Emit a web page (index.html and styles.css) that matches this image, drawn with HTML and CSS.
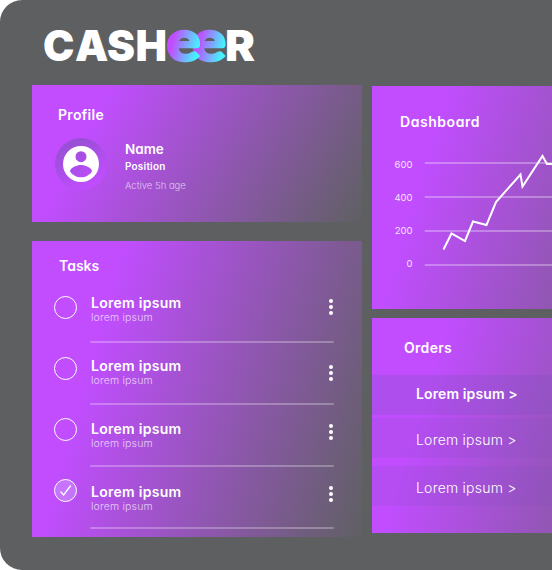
FILE: index.html
```html
<!DOCTYPE html>
<html lang="en">
<head>
<meta charset="utf-8">
<title>Casheer</title>
<link rel="stylesheet" href="styles.css">
</head>
<body>
<div class="app">
  <header class="header">
    <svg class="logo" width="214" height="40" viewBox="0 0 214 40" role="img" aria-label="Casheer">
      <defs>
        <linearGradient id="brand" x1="0.1" y1="0.35" x2="0.85" y2="0.75">
          <stop offset="0.2" stop-color="#c14dff"/>
          <stop offset="1" stop-color="#46f0ff"/>
        </linearGradient>
      </defs>
      <text class="logo-caps" x="1 33 65 93.5" y="35">CASH</text>
      <text class="logo-caps" x="183" y="35" textLength="30" lengthAdjust="spacingAndGlyphs">R</text>
      <text class="logo-e" x="150" y="34.500" textLength="34" lengthAdjust="spacingAndGlyphs">e</text>
      <text class="logo-e" x="124.500" y="34.500" textLength="34" lengthAdjust="spacingAndGlyphs">e</text>
    </svg>
  </header>
  <main class="columns">
    <div class="column">
      <section class="card profile">
        <h2 class="title">Profile</h2>
        <div class="person">
          <div class="avatar">
            <svg width="36" height="36" viewBox="0 0 36 36">
              <path fill="#fff" fill-rule="evenodd" d="M18 0a18 18 0 1 0 0 36a18 18 0 0 0 0-36zM18 5.2a5.5 5.5 0 1 1 0 11a5.5 5.5 0 0 1 0-11zM18 31.2c-4.5 0-8.600-2.300-11-5.800c.1-3.600 7.300-6.300 11-6.300s10.900 2.700 11 6.300c-2.400 3.500-6.500 5.800-11 5.800z"/>
            </svg>
          </div>
          <div class="details">
            <div class="name">Name</div>
            <div class="position">Position</div>
            <div class="active">Active 5h age</div>
          </div>
        </div>
      </section>
      <section class="card tasks">
        <h2 class="title">Tasks</h2>
        <ul class="task-list">
          <li class="task"><span class="check"></span><div class="body"><div class="text"><b>Lorem ipsum</b><small>lorem ipsum</small></div><span class="dots"><i></i><i></i><i></i></span></div></li>
          <li class="task"><span class="check"></span><div class="body"><div class="text"><b>Lorem ipsum</b><small>lorem ipsum</small></div><span class="dots"><i></i><i></i><i></i></span></div></li>
          <li class="task"><span class="check"></span><div class="body"><div class="text"><b>Lorem ipsum</b><small>lorem ipsum</small></div><span class="dots"><i></i><i></i><i></i></span></div></li>
          <li class="task"><span class="check done"><svg width="21" height="21" viewBox="0 0 21 21"><path d="M5.500 11.500L8.600 15L15.800 5.500" fill="none" stroke="#fff" stroke-width="1.300"/></svg></span><div class="body"><div class="text"><b>Lorem ipsum</b><small>lorem ipsum</small></div><span class="dots"><i></i><i></i><i></i></span></div></li>
        </ul>
      </section>
    </div>
    <div class="column column-right">
      <section class="card dashboard">
        <h2 class="title">Dashboard</h2>
        <div class="chart">
          <div class="axis"><span>600</span><span>400</span><span>200</span><span>0</span></div>
          <svg class="plot" width="140" height="120" viewBox="0 0 140 120">
            <g stroke="#fff" stroke-opacity=".3" stroke-width="2" stroke-linecap="round">
              <path d="M1.500 13H150M1.500 47H150M1.500 81H150M1.500 115H150"/>
            </g>
            <path d="M19.500 99.500L27.500 83.500L41 91L49 71.500L62.500 75L72 52L96.500 24.500L98.500 36.500L118.500 6L123 14H140" fill="none" stroke="#fff" stroke-width="2"/>
          </svg>
        </div>
      </section>
      <section class="card orders">
        <h2 class="title">Orders</h2>
        <div class="order current">Lorem ipsum &gt;</div>
        <div class="order">Lorem ipsum &gt;</div>
        <div class="order">Lorem ipsum &gt;</div>
      </section>
    </div>
  </main>
</div>
</body>
</html>
```
FILE: styles.css
```css
* { box-sizing: border-box; }
body {
  margin: 0;
  background: #fff;
  overflow: hidden;
  color: #fff;
  font-family: Inter, "Liberation Sans", sans-serif;
  font-feature-settings: "cv11";
}
.app {
  width: 552px;
  height: 570px;
  overflow: hidden;
  background: #5e5f61;
  border-radius: 22px 0 0 22px;
}
.header { height: 85px; padding: 26px 0 0 42px; }
.logo { display: block; overflow: visible; }
.logo-caps { font-size: 42px; font-weight: 900; fill: #fff; }
.logo-e { font-family: Lato, sans-serif; font-size: 57px; font-weight: 900; fill: url(#brand); stroke: url(#brand); stroke-width: 2.500px; }
.columns {
  display: grid;
  grid-template-columns: 330px 180px;
  column-gap: 10px;
  padding-left: 32px;
  align-items: start;
}
.column { display: flex; flex-direction: column; gap: 19px; }
.column-right { gap: 9px; padding-top: 1px; }
.card { overflow: hidden; }
.title {
  margin: 0;
  font-size: 14px;
  line-height: 20px;
  font-weight: 600;
  letter-spacing: .3px;
}
.profile {
  height: 137px;
  padding: 20px 26px;
  background: linear-gradient(118deg, #c14dff 70px, #5f6063 355px);
}
.person { display: flex; margin: 13px 0 0 -3px; }
.avatar {
  display: grid;
  place-items: center;
  width: 52px;
  height: 52px;
  border-radius: 50%;
  background: linear-gradient(150deg, #8f50cb, #c14dff 85%);
}
.details { padding: 2px 0 0 18px; }
.name { font-size: 13.500px; line-height: 18px; font-weight: 600; }
.position { font-size: 10px; line-height: 16px; font-weight: 600; letter-spacing: .2px; }
.active { margin-top: 4px; font-size: 9.500px; line-height: 16px; font-weight: 300; opacity: .65; }
.tasks {
  height: 296px;
  padding: 15px 28px 0 22px;
  background: linear-gradient(106deg, #c14dff 88px, #5f6063 399px);
}
.tasks .title { padding-left: 5px; letter-spacing: 0; }
.task-list { margin: 5px 0 0; padding: 0; list-style: none; }
.task { display: flex; height: 62px; }
.check {
  width: 23px;
  height: 23px;
  margin-top: 15px;
  border: 1.500px solid #fff;
  border-radius: 50%;
}
.check svg { display: block; }
.done { background: rgba(205, 150, 255, .55); }
.body {
  display: flex;
  justify-content: space-between;
  width: 244px;
  margin-left: 13px;
  position: relative;
}
.body::after {
  content: "";
  position: absolute;
  left: 0;
  right: 0;
  bottom: 0;
  height: 2px;
  border-radius: 1px;
  background: rgba(255, 255, 255, .27);
}
.text { padding: 13px 0 0 1px; }
.text b { display: block; font-size: 14px; line-height: 18px; font-weight: 600; letter-spacing: .28px; }
.text small { display: block; font-size: 10.500px; line-height: 11px; font-weight: 300; letter-spacing: .17px; opacity: .7; }
.dots { display: flex; flex-direction: column; gap: 2px; margin: 18px 1px 0 0; }
.dots i { width: 4px; height: 4px; border-radius: 50%; background: #fff; }
.task:nth-child(2) .check { margin-top: 14px; }
.task:nth-child(3) .check { margin-top: 13px; }
.task:nth-child(4) .check { margin-top: 12px; }
.task:nth-child(2) .text { padding-top: 14px; }
.task:nth-child(3) .text { padding-top: 15px; }
.task:nth-child(4) .text { padding-top: 16px; }
.task:nth-child(2) .dots { margin-top: 22px; }
.task:nth-child(n+3) .dots { margin-top: 19px; }
.dashboard {
  height: 223px;
  padding: 26px 0 0 28px;
  background: linear-gradient(107deg, #c14dff 72px, #5f6063 407px, #5f6063 1000px);
}
.dashboard .title { letter-spacing: .55px; }
.chart { display: flex; margin: 18px 0 0 -8px; }
.axis {
  flex: none;
  width: 20.500px;
  padding-top: 7px;
  font-size: 9.500px;
  line-height: 16px;
  text-align: right;
  opacity: .85;
}
.axis span { display: block; height: 33px; }
.plot { display: block; flex: none; margin-left: 11.500px; }
.orders {
  height: 215px;
  padding-top: 20px;
  background: linear-gradient(107deg, #c14dff 72px, #5f6063 407px, #5f6063 1000px);
}
.orders .title { padding-left: 32px; margin-bottom: 17px; }
.order {
  height: 40px;
  margin-bottom: 8px;
  padding-left: 44px;
  font-size: 14px;
  font-weight: 350;
  letter-spacing: .22px;
  line-height: 44px;
  background: rgba(125, 80, 190, .18);
}
.current { margin-bottom: 3px; font-weight: 600; letter-spacing: .12px; line-height: 38px; background: rgba(125, 80, 190, .27); }
```
